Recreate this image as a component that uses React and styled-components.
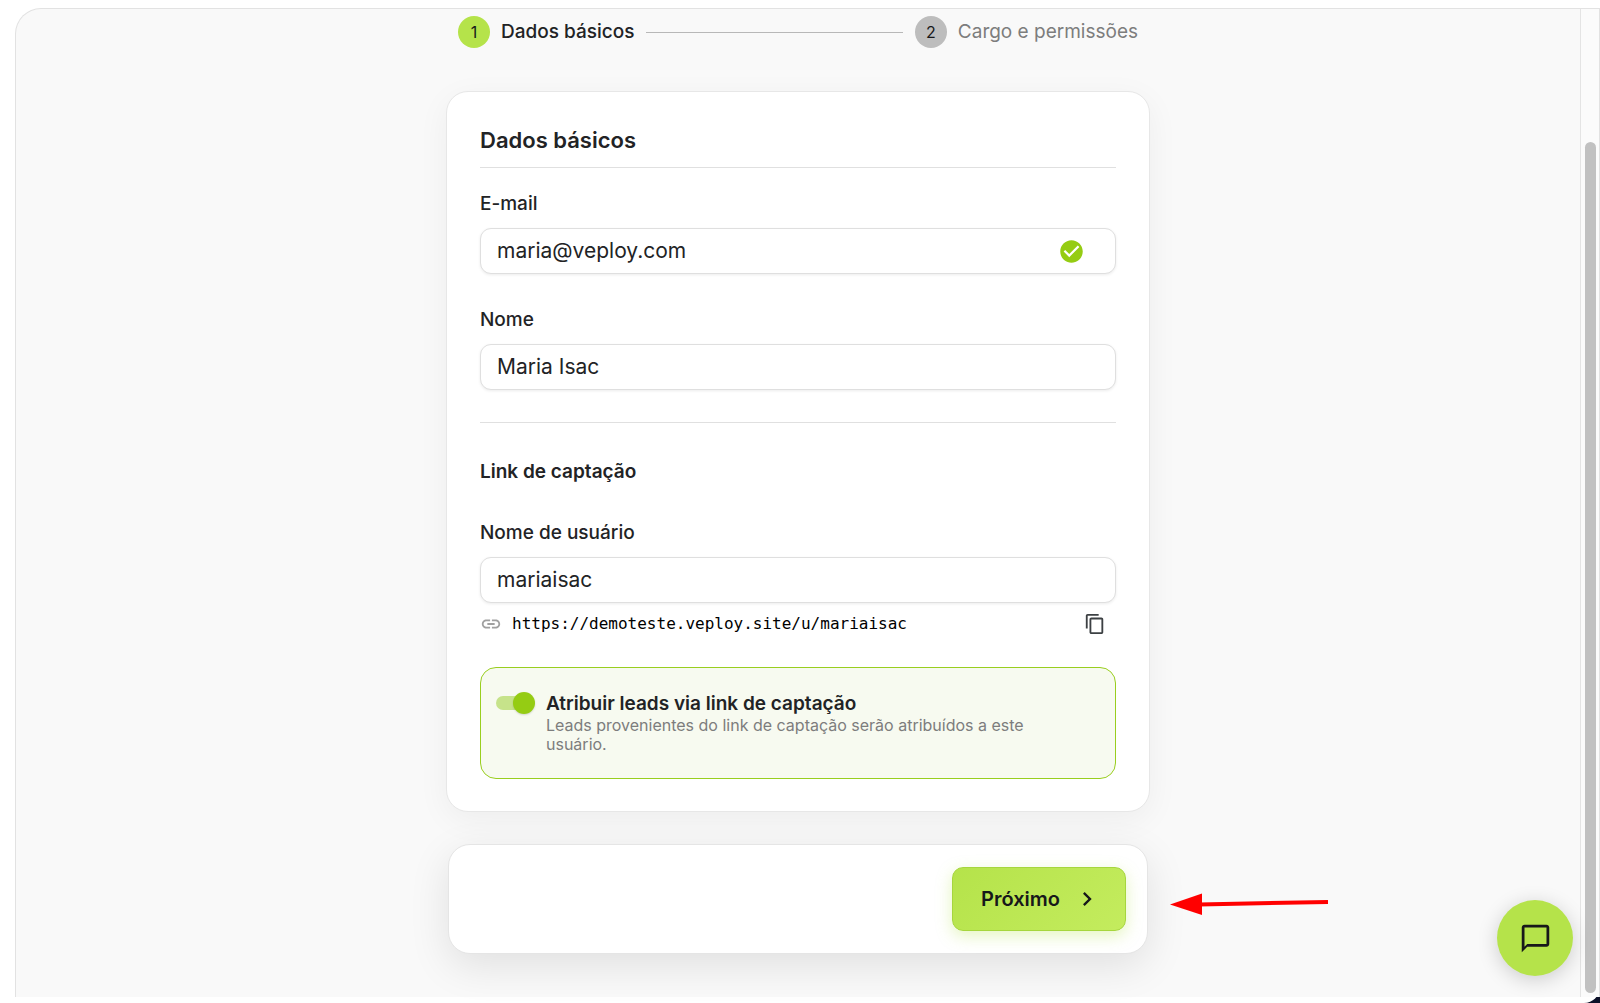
import React, { useState } from "react";
import styled, { createGlobalStyle } from "styled-components";
import {
  MdCheckCircle,
  MdChatBubbleOutline,
  MdChevronRight,
  MdContentCopy,
  MdLink,
} from "react-icons/md";

const GlobalStyle = createGlobalStyle`
  *, *::before, *::after { box-sizing: border-box; }
  body {
    margin: 0;
    background: #0b1028;
    color: #222325;
    font-family: Inter, "Liberation Sans", sans-serif;
    font-size: 19px;
    line-height: 24px;
  }
  button, input { font: inherit; color: inherit; }
`;

const Page = styled.div`
  display: flex;
  min-height: 100vh;
  padding: 8px 0 6px 15px;
  background: #ffffff;
  border-bottom-right-radius: 16px;
`;

const Frame = styled.div`
  display: flex;
  flex: 1;
  border: 1px solid #e2e2e2;
  border-bottom: 0;
  border-top-left-radius: 26px;
  background: #f9f9f9;
`;

const Content = styled.main`
  display: flex;
  flex: 1;
  flex-direction: column;
  align-items: center;
  padding: 7px 24px 40px;
`;

const Column = styled.div`
  display: flex;
  flex-direction: column;
  width: 100%;
  max-width: 704px;
`;

const ScrollGutter = styled.div`
  display: flex;
  flex-direction: column;
  align-items: center;
  width: 19px;
  padding: 133px 0 4px;
  border-left: 1px solid #e4e4e4;
  background: #fbfbfb;
`;

const ScrollThumb = styled.div`
  flex: 1;
  width: 11px;
  border-radius: 6px;
  background: #c1c1c1;
`;

const Stepper = styled.ol`
  display: flex;
  align-items: center;
  gap: 12px;
  margin: 0 0 43px;
  padding: 0 12px;
  list-style: none;
`;

const Step = styled.li`
  display: flex;
  align-items: center;
  gap: 11px;
  color: ${({ $active }) => ($active ? "#222325" : "#7d7d7d")};
  font-weight: ${({ $active }) => ($active ? 500 : 400)};
`;

const StepNumber = styled.span`
  display: grid;
  place-items: center;
  width: 32px;
  height: 32px;
  border-radius: 50%;
  background: ${({ $active }) => ($active ? "#b5e34a" : "#bdbdbd")};
  color: #17181a;
  font-size: 16px;
  font-weight: 400;
`;

const StepLine = styled.li`
  flex: 1;
  height: 1px;
  background: #b8b8b8;
`;

const Card = styled.form`
  padding: 32px 33px;
  border: 1px solid #e7e7e7;
  border-radius: 22px;
  background: #ffffff;
  box-shadow: 0 8px 32px rgba(0, 0, 0, 0.05);
`;

const CardTitle = styled.h1`
  margin: 0 0 24px;
  padding-bottom: 11px;
  border-bottom: 1px solid #e0e0e0;
  font-size: 22px;
  font-weight: 600;
  line-height: 32px;
`;

const Field = styled.div`
  display: flex;
  flex-direction: column;
  gap: 12px;
  margin-bottom: ${({ $space = 0 }) => $space}px;
`;

const Label = styled.label`
  font-weight: 500;
`;

const InputBox = styled.div`
  display: flex;
  align-items: center;
  height: 46px;
  padding: 0 30px 0 16px;
  border: 1px solid #dfdfdf;
  border-radius: 11px;
  background: #ffffff;
  box-shadow: 0 1px 3px rgba(0, 0, 0, 0.08);
`;

const TextInput = styled.input`
  flex: 1;
  min-width: 0;
  padding: 0;
  border: 0;
  outline: 0;
  background: transparent;
  font-size: 21px;
`;

const ValidIcon = styled(MdCheckCircle)`
  width: 27px;
  height: 27px;
  color: #95cc13;
`;

const Divider = styled.hr`
  width: 100%;
  height: 1px;
  margin: 0 0 37px;
  border: 0;
  background: #e0e0e0;
`;

const SectionTitle = styled.h2`
  margin: 0 0 37px;
  font-size: 19px;
  font-weight: 600;
  line-height: 24px;
`;

const LinkRow = styled.div`
  display: flex;
  align-items: center;
  gap: 10px;
  height: 34px;
  margin: 4px 0 26px;
  padding-right: 2px;
`;

const LinkIcon = styled(MdLink)`
  width: 22px;
  height: 22px;
  color: #a0a0a0;
`;

const LinkText = styled.a`
  flex: 1;
  color: #000000;
  font-family: "DejaVu Sans Mono", monospace;
  font-size: 16px;
  text-decoration: none;
`;

const CopyButton = styled.button`
  display: grid;
  place-items: center;
  padding: 6px 8px;
  border: 0;
  background: transparent;
  color: #3c4043;
  cursor: pointer;

  svg { width: 22px; height: 22px; }
`;

const SwitchCard = styled.div`
  display: flex;
  align-items: flex-start;
  gap: 14px;
  padding: 24px 64px 24px 15px;
  border: 1px solid #99ce1f;
  border-radius: 16px;
  background: #f7faf0;
`;

const Switch = styled.input`
  position: relative;
  flex: none;
  width: 36px;
  height: 14px;
  margin: 4px 0 0;
  border-radius: 7px;
  appearance: none;
  background: ${({ checked }) => (checked ? "#c6e38a" : "#bdbdbd")};
  cursor: pointer;

  &::before {
    content: "";
    position: absolute;
    top: -4px;
    left: ${({ checked }) => (checked ? 17 : -3)}px;
    width: 22px;
    height: 22px;
    border-radius: 50%;
    background: ${({ checked }) => (checked ? "#95cc13" : "#fafafa")};
    box-shadow: 0 1px 2px rgba(0, 0, 0, 0.15);
  }
`;

const SwitchText = styled.div`
  display: flex;
  flex-direction: column;
`;

const SwitchLabel = styled.label`
  font-weight: 600;
`;

const SwitchHint = styled.span`
  color: #7d7d7d;
  font-size: 16px;
  line-height: 19px;
`;

const Footer = styled.footer`
  position: relative;
  display: flex;
  justify-content: flex-end;
  margin: 32px 2px 0;
  padding: 22px 21px;
  border: 1px solid #e5e5e5;
  border-radius: 22px;
  background: #ffffff;
  box-shadow: 0 12px 40px rgba(0, 0, 0, 0.1);
`;

const NextButton = styled.button`
  display: flex;
  align-items: center;
  gap: 13px;
  height: 64px;
  padding: 0 24px 0 28px;
  border: 1px solid #a6d63d;
  border-radius: 11px;
  background: linear-gradient(135deg, #b5e34a, #c4ec5e);
  box-shadow: 0 5px 16px rgba(181, 227, 74, 0.35);
  color: #17181a;
  font-size: 20px;
  font-weight: 600;
  cursor: pointer;

  svg { width: 28px; height: 28px; }
`;

const Pointer = styled.svg`
  position: absolute;
  top: 48px;
  left: calc(100% + 22px);
  width: 160px;
  height: 24px;
`;

const ChatButton = styled.button`
  position: fixed;
  right: 27px;
  bottom: 27px;
  display: grid;
  place-items: center;
  width: 76px;
  height: 76px;
  padding: 0;
  border: 0;
  border-radius: 50%;
  background: #b5e34a;
  box-shadow: 0 4px 20px rgba(0, 0, 0, 0.18);
  color: #17181a;
  cursor: pointer;

  svg { width: 33px; height: 33px; }
`;

export default function App() {
  const [email, setEmail] = useState("maria@veploy.com");
  const [name, setName] = useState("Maria Isac");
  const [username, setUsername] = useState("mariaisac");
  const [assign, setAssign] = useState(true);
  const link = `https://demoteste.veploy.site/u/${username}`;

  return (
    <>
      <GlobalStyle />
      <Page>
        <Frame>
          <Content>
            <Column>
              <Stepper>
                <Step $active aria-current="step">
                  <StepNumber $active>1</StepNumber>
                  Dados básicos
                </Step>
                <StepLine aria-hidden="true" />
                <Step>
                  <StepNumber>2</StepNumber>
                  Cargo e permissões
                </Step>
              </Stepper>

              <Card id="basic-data" onSubmit={(e) => e.preventDefault()}>
                <CardTitle>Dados básicos</CardTitle>
                <Field $space={34}>
                  <Label htmlFor="email">E-mail</Label>
                  <InputBox>
                    <TextInput
                      id="email"
                      type="email"
                      value={email}
                      onChange={(e) => setEmail(e.target.value)}
                    />
                    <ValidIcon aria-hidden="true" />
                  </InputBox>
                </Field>
                <Field $space={32}>
                  <Label htmlFor="name">Nome</Label>
                  <InputBox>
                    <TextInput
                      id="name"
                      type="text"
                      value={name}
                      onChange={(e) => setName(e.target.value)}
                    />
                  </InputBox>
                </Field>
                <Divider />
                <SectionTitle>Link de captação</SectionTitle>
                <Field>
                  <Label htmlFor="username">Nome de usuário</Label>
                  <InputBox>
                    <TextInput
                      id="username"
                      type="text"
                      value={username}
                      onChange={(e) => setUsername(e.target.value)}
                    />
                  </InputBox>
                </Field>
                <LinkRow>
                  <LinkIcon aria-hidden="true" />
                  <LinkText href={link}>{link}</LinkText>
                  <CopyButton type="button" aria-label="Copiar link">
                    <MdContentCopy />
                  </CopyButton>
                </LinkRow>
                <SwitchCard>
                  <Switch
                    id="assign"
                    type="checkbox"
                    role="switch"
                    checked={assign}
                    onChange={(e) => setAssign(e.target.checked)}
                  />
                  <SwitchText>
                    <SwitchLabel htmlFor="assign">
                      Atribuir leads via link de captação
                    </SwitchLabel>
                    <SwitchHint>
                      Leads provenientes do link de captação serão atribuídos a
                      este usuário.
                    </SwitchHint>
                  </SwitchText>
                </SwitchCard>
              </Card>

              <Footer>
                <NextButton type="submit" form="basic-data">
                  Próximo
                  <MdChevronRight aria-hidden="true" />
                </NextButton>
                <Pointer viewBox="0 0 160 24" aria-hidden="true">
                  <path d="M30 11.5 159 9" stroke="#ff0000" strokeWidth="4" />
                  <path d="M1 11.5 33 0.5V22Z" fill="#ff0000" />
                </Pointer>
              </Footer>
            </Column>
          </Content>
          <ScrollGutter aria-hidden="true">
            <ScrollThumb />
          </ScrollGutter>
        </Frame>
      </Page>
      <ChatButton type="button" aria-label="Abrir chat">
        <MdChatBubbleOutline />
      </ChatButton>
    </>
  );
}
